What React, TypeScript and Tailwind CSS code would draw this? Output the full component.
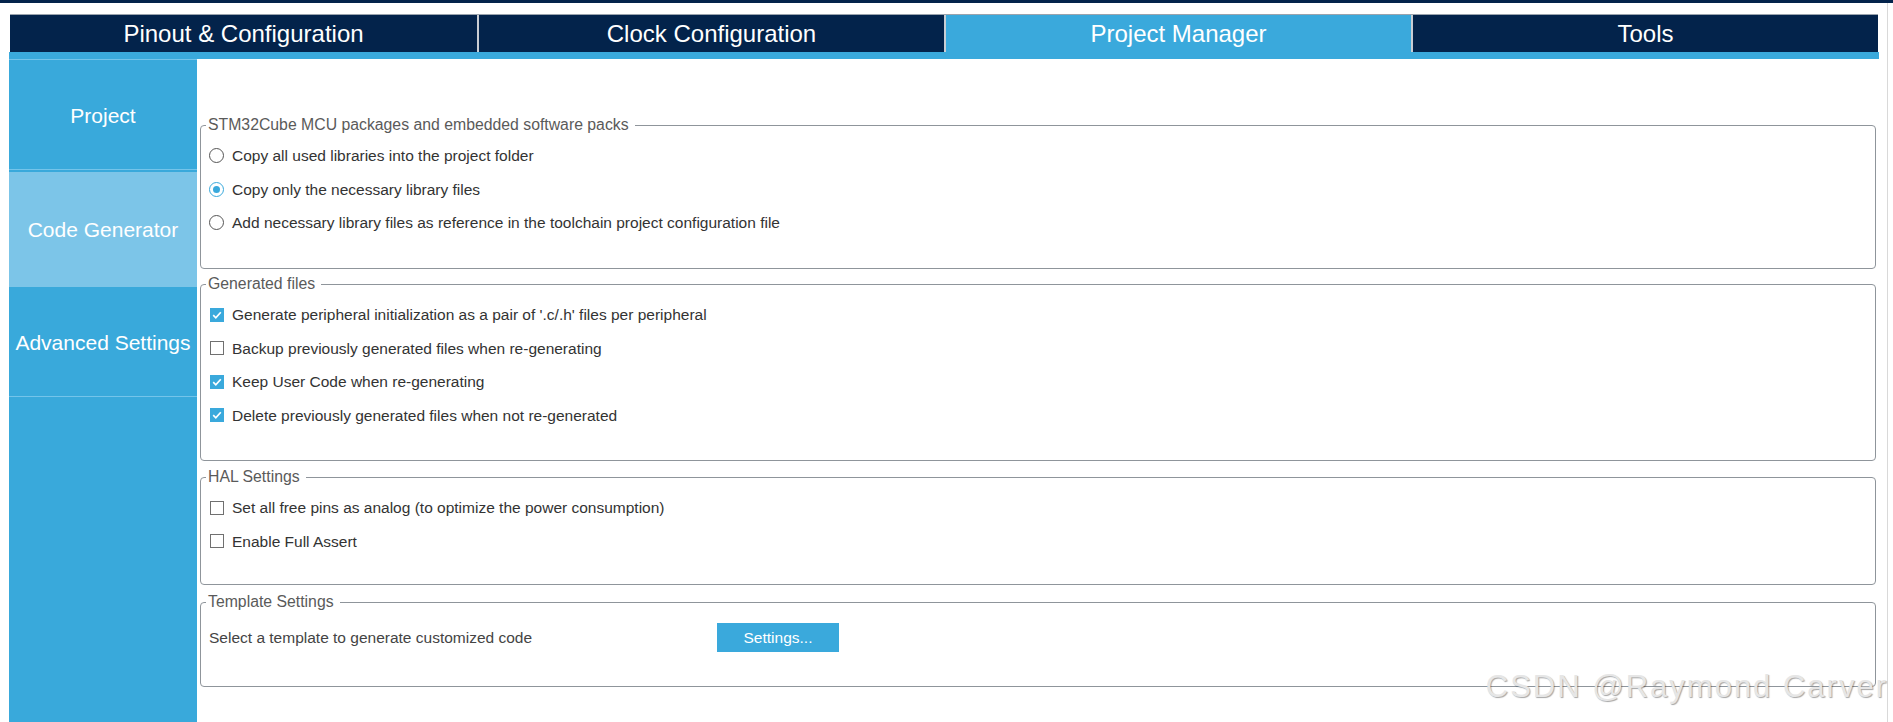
import React from "react";

const tabs = [
  { label: "Pinout & Configuration", active: false },
  { label: "Clock Configuration", active: false },
  { label: "Project Manager", active: true },
  { label: "Tools", active: false },
];

function Radio({ checked }: { checked?: boolean }) {
  return (
    <span
      className={`flex h-[15px] w-[15px] items-center justify-center rounded-full border bg-white ${
        checked ? "border-[#39a9dc]" : "border-[#555]"
      }`}
    >
      {checked && <span className="h-[7px] w-[7px] rounded-full bg-[#39a9dc]" />}
    </span>
  );
}

function Check({ checked }: { checked?: boolean }) {
  if (checked) {
    return (
      <span className="ml-[1px] flex h-[14px] w-[14px] items-center justify-center bg-[#3aa9dc]">
        <svg width="12" height="12" viewBox="0 0 12 12" fill="none">
          <path d="M2.2 6.2 L4.8 8.8 L9.8 3.2" stroke="white" strokeWidth="1.7" />
        </svg>
      </span>
    );
  }
  return <span className="ml-[1px] h-[14px] w-[14px] border border-[#707070] bg-white" />;
}

function Row({ control, label }: { control: React.ReactNode; label: string }) {
  return (
    <div className="flex h-[33.5px] items-center">
      <span className="flex w-[16px] items-center">{control}</span>
      <span className="ml-[7px] text-[15.5px] text-[#333]">{label}</span>
    </div>
  );
}

function Box({
  title,
  className,
  children,
}: {
  title: string;
  className: string;
  children: React.ReactNode;
}) {
  return (
    <fieldset className={`rounded-[4px] border border-[#8f959b] px-[8px] ${className}`}>
      <legend className="-ml-[3px] pl-[2px] pr-[6px] text-[15.8px] leading-[18px] text-[#5a5a5a]">
        {title}
      </legend>
      {children}
    </fieldset>
  );
}

export default function App() {
  return (
    <div className="relative h-[722px] w-[1893px] overflow-hidden bg-white font-['Liberation_Sans',Arial,sans-serif]">
      <div className="h-[3px] bg-[#03234b]" />
      <div className="flex h-[719px]">
        <div className="ml-[9px] flex w-[1870px] flex-col">
          <div className="mt-[11px] ml-[1px] mr-[1px] grid grid-cols-4 border-t border-[#9aa3ad]">
            {tabs.map((t, i) => (
              <div
                key={t.label}
                className={`flex h-[37px] items-center justify-center text-[24px] text-white ${
                  t.active ? "bg-[#3aa9dc]" : "bg-[#03234b]"
                } ${i > 0 ? "border-l-2 border-[#c9cdd3]" : ""}`}
              >
                {t.label}
              </div>
            ))}
          </div>
          <div className="h-[7px] bg-[#3aa9dc]" />

          <div className="flex flex-1">
            <div className="flex w-[188px] flex-col bg-[#39a9db] text-[21px] text-white">
              <div className="flex h-[111px] items-center justify-center border-t border-b border-[#74c4ea] pt-[2px]">
                Project
              </div>
              <div className="mt-[2px] flex h-[115px] items-center justify-center bg-[#7cc5e8]">
                Code Generator
              </div>
              <div className="flex h-[110px] items-center justify-center border-b border-[#74c4ea] pt-[2px]">
                Advanced Settings
              </div>
            </div>

            <div className="flex-1 pt-[57px] pl-[3px] pr-[3px]">
              <Box title="STM32Cube MCU packages and embedded software packs" className="pt-[5px] pb-[28.5px]">
                <Row control={<Radio />} label="Copy all used libraries into the project folder" />
                <Row control={<Radio checked />} label="Copy only the necessary library files" />
                <Row
                  control={<Radio />}
                  label="Add necessary library files as reference in the toolchain project configuration file"
                />
              </Box>

              <Box title="Generated files" className="mt-[6px] pt-[5px] pb-[28px]">
                <Row
                  control={<Check checked />}
                  label="Generate peripheral initialization as a pair of '.c/.h' files per peripheral"
                />
                <Row control={<Check />} label="Backup previously generated files when re-generating" />
                <Row control={<Check checked />} label="Keep User Code when re-generating" />
                <Row control={<Check checked />} label="Delete previously generated files when not re-generated" />
              </Box>

              <Box title="HAL Settings" className="mt-[7px] pt-[5px] pb-[26px]">
                <Row control={<Check />} label="Set all free pins as analog (to optimize the power consumption)" />
                <Row control={<Check />} label="Enable Full Assert" />
              </Box>

              <Box title="Template Settings" className="mt-[8px] pt-[12px] pb-[34px]">
                <div className="flex h-[29px] items-center">
                  <span className="w-[508px] text-[15.5px] text-[#444]">
                    Select a template to generate customized code
                  </span>
                  <button className="h-[29px] w-[122px] bg-[#3aa9dc] text-[15.5px] text-white">
                    Settings...
                  </button>
                </div>
              </Box>
            </div>
          </div>
        </div>
        <div className="w-[8px]" />
        <div className="w-[1px] bg-[#d9d9d9]" />
      </div>

      <div className="absolute right-[5px] top-[671px] text-[31px] leading-none tracking-[2px] text-[#e6e6e6] [text-shadow:1px_1px_1px_rgba(0,0,0,0.35)]">
        CSDN @Raymond Carver
      </div>
    </div>
  );
}
